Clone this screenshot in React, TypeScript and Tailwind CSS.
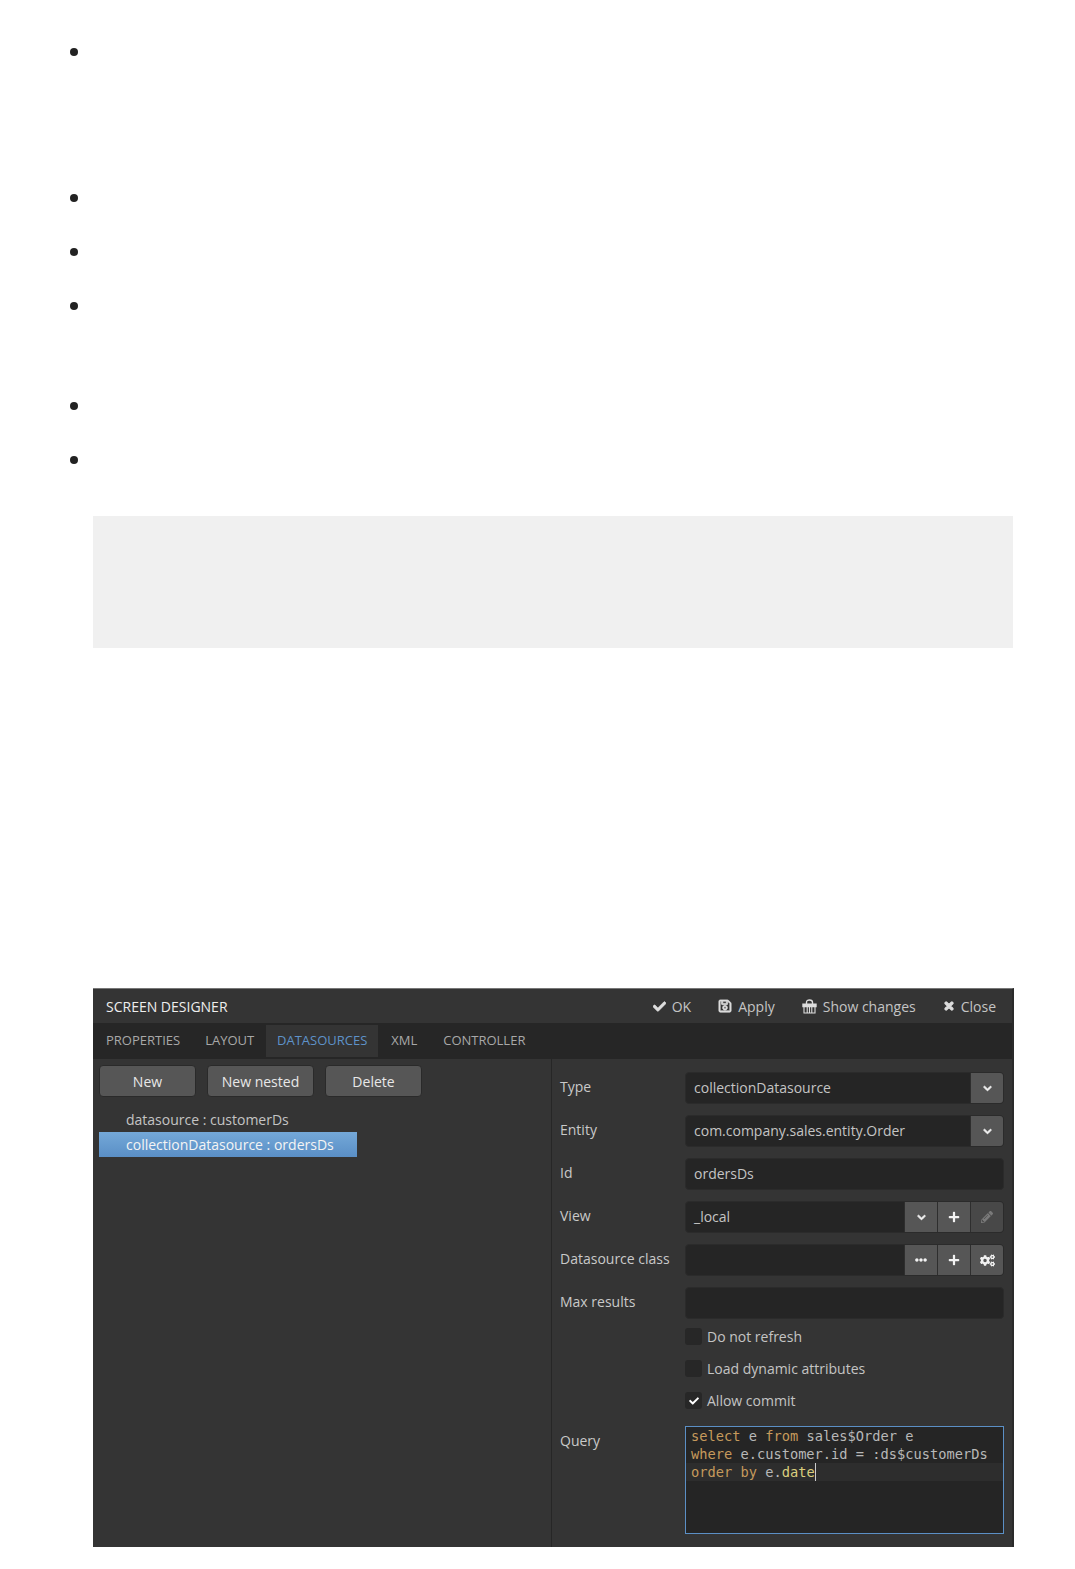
import { FaCheck, FaRegSave, FaTimes, FaChevronDown, FaPlus, FaPencilAlt, FaEllipsisH, FaCogs } from "react-icons/fa";
import type { ReactNode } from "react";

function Bullet({ h }: { h: string }) {
  return (
    <div className={`flex items-start ${h}`}>
      <span className="mt-[19px] ml-[70px] h-2 w-2 rounded-full bg-[#222222]" />
    </div>
  );
}

function HeadAction({ icon, label }: { icon: ReactNode; label: string }) {
  return (
    <span className="flex items-center gap-[6px]">
      {icon}
      <span>{label}</span>
    </span>
  );
}

function IconBtn({ children, dim }: { children: ReactNode; dim?: boolean }) {
  return (
    <span className={`flex w-[33px] items-center justify-center border-l border-[#2e2e2e] ${dim ? "bg-[#484848] text-[#7a7a7a]" : "bg-[#565656] text-[#f2f2f2]"}`}>
      {children}
    </span>
  );
}

function GiftIcon() {
  return (
    <svg width="15" height="15" viewBox="0 0 15 15" fill="none" stroke="#dddddd" strokeWidth="1.4">
      <path d="M4.5 5V3.2C4.5 1.6 5.8 1 7.5 1s3 .6 3 2.2V5" />
      <path d="M1 5.2h13v2.4H1z" fill="#dddddd" />
      <path d="M2 7.6V14h11V7.6M5.2 7.6V14M7.5 7.6V14M9.8 7.6V14" strokeWidth="1.1" />
    </svg>
  );
}

function Chevron() {
  return <FaChevronDown size={9} stroke="currentColor" strokeWidth={50} />;
}

function Field({ label, value, buttons }: { label: string; value?: string; buttons?: ReactNode }) {
  return (
    <div className="flex h-[32px] items-center">
      <span className="w-[125px] pb-[4px] text-[#c9c9c9]">{label}</span>
      <div className="flex h-[32px] w-[319px] overflow-hidden rounded-[4px] border border-[#2b2b2b] bg-[#252525]">
        <span className="flex-1 pl-[8px] leading-[30px] text-[#c4c4c4]">{value}</span>
        {buttons}
      </div>
    </div>
  );
}

function Check({ label, checked }: { label: string; checked?: boolean }) {
  return (
    <div className="ml-[125px] flex h-[17px] items-center gap-[5px]">
      <span className="flex h-[17px] w-[17px] items-center justify-center rounded-[3px] bg-[#272727] text-white">
        {checked && <FaCheck size={10} />}
      </span>
      <span className="text-[#c4c4c4]">{label}</span>
    </div>
  );
}

export default function App() {
  const kw = "text-[#c59a5c]";
  return (
    <div className="h-[1569px] overflow-hidden bg-white">
      <div className="h-[29px]" />
      <Bullet h="h-[146px]" />
      <Bullet h="h-[54px]" />
      <Bullet h="h-[54px]" />
      <Bullet h="h-[100px]" />
      <Bullet h="h-[54px]" />
      <Bullet h="h-[79px]" />
      <div className="ml-[93px] h-[132px] w-[920px] bg-[#f0f0f0]" />
      <div className="h-[340px]" />
      <div className="ml-[93px] flex h-[559px] w-[921px] flex-col border-t border-t-[#777777] border-r-2 border-r-[#2a2a2a] bg-[#343434] font-['Open_Sans',sans-serif] text-[14px]">
        <div className="flex h-[34px] shrink-0 items-center justify-between pl-[13px] pr-[16px]">
          <span className="text-[#eeeeee]">SCREEN DESIGNER</span>
          <div className="flex items-center gap-[27px] text-[#c4c4c4]">
            <HeadAction icon={<FaCheck size={13} stroke="#dddddd" strokeWidth={25} className="text-[#dddddd]" />} label="OK" />
            <HeadAction icon={<FaRegSave size={14} stroke="#dddddd" strokeWidth={25} className="text-[#dddddd]" />} label="Apply" />
            <HeadAction icon={<GiftIcon />} label="Show changes" />
            <HeadAction icon={<FaTimes size={12} stroke="#dddddd" strokeWidth={50} className="text-[#dddddd]" />} label="Close" />
          </div>
        </div>
        <div className="flex h-[36px] shrink-0 items-end bg-[#262626] pb-[2px] text-[13px] text-[#a8a8a8]">
          <span className="flex h-[32px] items-center pl-[13px] pr-[12px]">PROPERTIES</span>
          <span className="flex h-[32px] items-center pl-[13px] pr-[12px]">LAYOUT</span>
          <span className="flex h-[32px] w-[112px] items-center justify-center bg-[#343434] text-[#5e92c9]">DATASOURCES</span>
          <span className="flex h-[32px] items-center pl-[13px] pr-[13px]">XML</span>
          <span className="flex h-[32px] items-center pl-[13px]">CONTROLLER</span>
        </div>
        <div className="flex min-h-0 flex-1">
          <div className="w-[459px] shrink-0 border-r border-[#262626] pl-[6px] pt-[6px]">
            <div className="flex gap-[11px]">
              {[["New", "w-[97px]"], ["New nested", "w-[107px]"], ["Delete", "w-[97px]"]].map(([t, w]) => (
                <button key={t} className={`h-[32px] rounded-[4px] border border-[#2a2a2a] bg-[#565656] text-[#e8e8e8] ${w}`}>{t}</button>
              ))}
            </div>
            <div className="mt-[11px] pl-[27px] leading-[24px] text-[#c4c4c4]">datasource : customerDs</div>
            <div className="w-[258px] bg-gradient-to-b from-[#74a8d8] to-[#5a8fc6] pl-[27px] leading-[25px] text-[#f4f4f4]">collectionDatasource : ordersDs</div>
          </div>
          <div className="flex flex-1 flex-col pl-[8px] pt-[13px]">
            <div className="flex flex-col gap-[11px]">
              <Field label="Type" value="collectionDatasource" buttons={<IconBtn><Chevron /></IconBtn>} />
              <Field label="Entity" value="com.company.sales.entity.Order" buttons={<IconBtn><Chevron /></IconBtn>} />
              <Field label="Id" value="ordersDs" />
              <Field label="View" value="_local" buttons={<><IconBtn><Chevron /></IconBtn><IconBtn><FaPlus size={12} /></IconBtn><IconBtn dim><FaPencilAlt size={12} /></IconBtn></>} />
              <Field label="Datasource class" buttons={<><IconBtn><FaEllipsisH size={12} /></IconBtn><IconBtn><FaPlus size={12} /></IconBtn><IconBtn><FaCogs size={15} /></IconBtn></>} />
              <Field label="Max results" />
            </div>
            <div className="mt-[9px] flex flex-col gap-[15px]">
              <Check label="Do not refresh" />
              <Check label="Load dynamic attributes" />
              <Check label="Allow commit" checked />
            </div>
            <div className="mt-[17px] flex">
              <span className="w-[125px] pt-[4px] text-[#c9c9c9]">Query</span>
              <div className="h-[108px] w-[319px] border border-[#5b8fc5] bg-[#252525] font-['DejaVu_Sans_Mono',monospace] text-[13.7px] leading-[18px] text-[#b8b8b8]">
                <div className="pl-[5px]"><span className={kw}>select</span> e <span className={kw}>from</span> sales$Order e</div>
                <div className="pl-[5px]"><span className={kw}>where</span> e.customer.id = :ds$customerDs</div>
                <div className="flex bg-[#2d2d2d] pl-[5px]"><span className={kw}>order by</span>&nbsp;e.<span className="border-r border-[#cccccc] text-[#dbcf7e]">date</span></div>
              </div>
            </div>
          </div>
        </div>
      </div>
    </div>
  );
}
